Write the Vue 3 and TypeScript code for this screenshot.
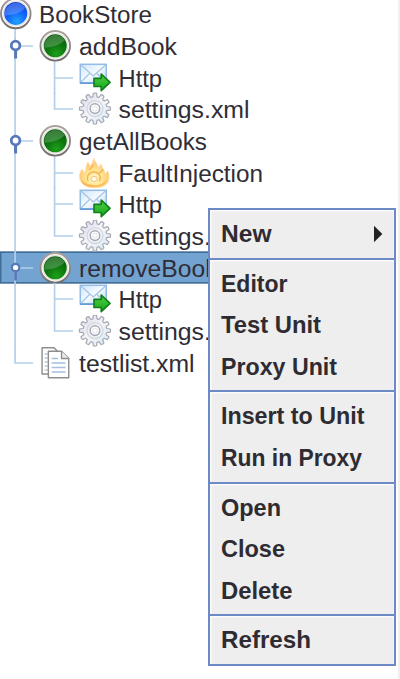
<script setup lang="ts">
type Icon = 'root' | 'unit' | 'mail' | 'gear' | 'fire' | 'docs'

interface TreeRow {
  label: string
  width: number
  depth: number
  icon: Icon
  last?: boolean
  selected?: boolean
  covered?: boolean
}

interface MenuItem {
  label: string
  width: number
  submenu?: boolean
}

const rows: TreeRow[] = [
  { label: 'BookStore', width: 113, depth: 0, icon: 'root' },
  { label: 'addBook', width: 98, depth: 1, icon: 'unit' },
  { label: 'Http', width: 43.5, depth: 2, icon: 'mail' },
  { label: 'settings.xml', width: 131, depth: 2, icon: 'gear', last: true },
  { label: 'getAllBooks', width: 128, depth: 1, icon: 'unit' },
  { label: 'FaultInjection', width: 144.5, depth: 2, icon: 'fire' },
  { label: 'Http', width: 43.5, depth: 2, icon: 'mail' },
  { label: 'settings.xml', width: 131, depth: 2, icon: 'gear', last: true, covered: true },
  { label: 'removeBook', width: 138.5, depth: 1, icon: 'unit', selected: true, covered: true },
  { label: 'Http', width: 43.5, depth: 2, icon: 'mail' },
  { label: 'settings.xml', width: 131, depth: 2, icon: 'gear', last: true, covered: true },
  { label: 'testlist.xml', width: 115.5, depth: 1, icon: 'docs', last: true },
]

const groups: MenuItem[][] = [
  [{ label: 'New', width: 50.5, submenu: true }],
  [
    { label: 'Editor', width: 66.5 },
    { label: 'Test Unit', width: 100 },
    { label: 'Proxy Unit', width: 116 },
  ],
  [
    { label: 'Insert to Unit', width: 143.5 },
    { label: 'Run in Proxy', width: 141 },
  ],
  [
    { label: 'Open', width: 60 },
    { label: 'Close', width: 64 },
    { label: 'Delete', width: 71.5 },
  ],
  [{ label: 'Refresh', width: 90 }],
]

const labelX = [39, 79, 118.5]

// Outline of a cog with twelve rounded teeth, centred on the origin.
const cog = Array.from({ length: 12 }, (_, i) => {
  const at = (r: number, offset: number) => {
    const a = ((i * 30 + offset) * Math.PI) / 180
    return `${(r * Math.sin(a)).toFixed(2)} ${(-r * Math.cos(a)).toFixed(2)}`
  }
  return `${i ? 'L' : 'M'}${at(12, -10)}L${at(15.3, -6)}Q${at(16, 0)} ${at(15.3, 6)}L${at(12, 10)}Q${at(11.4, 15)} ${at(12, 20)}`
}).join('') + 'Z'
</script>

<template>
  <main class="screen">
    <svg class="defs" width="0" height="0" aria-hidden="true">
      <defs>
        <linearGradient id="ring" x1="0" y1="0" x2="0" y2="1">
          <stop offset="0" stop-color="#aaa39d" />
          <stop offset="1" stop-color="#75706c" />
        </linearGradient>
        <radialGradient id="blue" cx=".55" cy=".85" r=".85">
          <stop offset="0" stop-color="#20a4ff" />
          <stop offset=".5" stop-color="#1266fa" />
          <stop offset="1" stop-color="#0d3fd8" />
        </radialGradient>
        <radialGradient id="green" cx=".55" cy=".85" r=".85">
          <stop offset="0" stop-color="#1fa01b" />
          <stop offset=".5" stop-color="#0c760d" />
          <stop offset="1" stop-color="#095a0d" />
        </radialGradient>
        <linearGradient id="paper" x1="0" y1="0" x2="1" y2="1">
          <stop offset="0" stop-color="#cfe6fb" />
          <stop offset=".5" stop-color="#f4faff" />
          <stop offset="1" stop-color="#b9d8f5" />
        </linearGradient>
        <linearGradient id="arrow" x1="0" y1="0" x2="0" y2="1">
          <stop offset="0" stop-color="#4fd345" />
          <stop offset="1" stop-color="#16a51a" />
        </linearGradient>
        <linearGradient id="steel" x1="0" y1="0" x2="1" y2="1">
          <stop offset="0" stop-color="#d9d4ea" />
          <stop offset=".5" stop-color="#f5f5f8" />
          <stop offset="1" stop-color="#cfe6f6" />
        </linearGradient>
        <radialGradient id="flame" cx=".5" cy=".68" r=".62">
          <stop offset="0" stop-color="#fff6cf" />
          <stop offset=".45" stop-color="#ffe590" />
          <stop offset=".8" stop-color="#ffc877" />
          <stop offset="1" stop-color="#ffe3b8" />
        </radialGradient>
      </defs>
    </svg>

    <div class="tree">
      <div v-for="(row, i) in rows" :key="i" class="row" :class="{ selected: row.selected, covered: row.covered }">
        <svg class="line" width="400" height="31.67" viewBox="0 0 400 31.67">
          <g class="branch">
            <path v-if="row.depth === 0" d="M15 15V32" />
            <template v-else>
              <path :d="row.icon === 'docs' ? 'M15 0V16H33' : 'M15 0V32'" />
              <path v-if="row.icon === 'unit'" d="M19 16H33M54.5 28V32" />
              <path v-if="row.depth === 2" :d="row.last ? 'M54.5 0V16H73' : 'M54.5 0V32M54.5 16H73'" />
            </template>
          </g>

          <g v-if="row.icon === 'unit'">
            <path class="stem" d="M15.5 20V28.5" />
            <circle class="knob" cx="15.5" cy="15.5" r="4.3" />
          </g>

          <g v-if="row.icon === 'root' || row.icon === 'unit'" :transform="row.icon === 'root' ? 'translate(15.7 15.5)' : 'translate(55.2 15.8)'">
            <circle r="14.8" fill="#fff" stroke="url(#ring)" stroke-width="1.9" />
            <circle r="12.4" fill="none" stroke="#e5e2df" stroke-width="1.2" />
            <circle r="11.5" :fill="row.icon === 'root' ? 'url(#blue)' : 'url(#green)'" />
            <path d="M-10.8 2A11 11 0 0 1 9.4-5.6Q4 1-10.8 2Z" fill="#fff" opacity=".2" />
          </g>

          <g v-if="row.icon === 'mail'">
            <rect x="80.2" y="2.3" width="26" height="18.5" fill="url(#paper)" stroke="#92bbe6" stroke-width="1.5" />
            <path d="M81 20L89.5 11.5M105.5 20L97 11.5M81 3L93.2 14L105.5 3" fill="none" stroke="#a4c3e2" stroke-width="1.2" />
            <path d="M80 21.2H106.5" stroke="#5d98d6" stroke-width="1.5" />
            <path d="M94 16.3H101.2V12L110 20.3L101.2 28.6V24.5H94Z" fill="url(#arrow)" stroke="#12801a" stroke-width="1.7" stroke-linejoin="round" />
          </g>

          <g v-if="row.icon === 'gear'" transform="translate(94.9 15.6)">
            <path :d="cog" fill="url(#steel)" stroke="#a5a8b1" stroke-width="1.2" />
            <circle r="8" fill="none" stroke="#d3d6dd" stroke-width="1.3" />
            <circle r="4.8" fill="#fff" stroke="#a7abb4" stroke-width="1.5" />
            <circle r="2.4" fill="none" stroke="#e0e2e8" />
          </g>

          <g v-if="row.icon === 'fire'">
            <path d="M83 27C78 23 79 16 82 12L84 16C87 13 85 8 88 5L90 9C93 7 92 3 94 1C95 5 98 7 98 11L101 7C102 12 105 13 105 17L108 14C110 21 109 26 104 29C98 32 88 31 83 27Z" fill="url(#flame)" stroke="#ffdca8" stroke-width=".8" />
            <path d="M81 22C82 30 90 31 95 30C102 30 106 27 107 22C105 26 101 28 96 28C90 28 84 27 81 22Z" fill="#fba93f" opacity=".7" />
            <path d="M88 24C86 18 90 15 94 15C99 15 102 20 99 24M89 13Q92 11 93 8M99 16Q102 15 103 12" fill="none" stroke="#f5b250" stroke-width="1.3" />
            <ellipse cx="94" cy="22" rx="3.2" ry="2.5" fill="#fffbea" stroke="#efc277" />
          </g>

          <g v-if="row.icon === 'docs'" stroke="#8d8d8d" stroke-width="1.4" stroke-linejoin="round">
            <path d="M42 .8H54L59 6V27H42Z" fill="#fff" />
            <path d="M44.5 7H50M44.5 11H50M44.5 15H50M44.5 19H50M44.5 23H50" stroke="#bccbdd" />
            <path d="M48.3 4.3H61.5L68.7 11.5V30.8H48.3Z" fill="#fff" />
            <path d="M61.5 4.3V11.5H68.7" fill="#eee" />
            <path d="M51.5 11.5H58M51.5 16H65.5M51.5 20.5H65.5M51.5 25H65.5" stroke="#a4c0df" />
          </g>

          <text class="label" :x="labelX[row.depth]" y="24.8" :textLength="row.width" lengthAdjust="spacingAndGlyphs">{{ row.label }}</text>
        </svg>
      </div>
    </div>

    <nav class="menu">
      <div v-for="(group, g) in groups" :key="g" class="group">
        <div v-for="item in group" :key="item.label" class="item">
          <svg class="line" width="150" height="41.5" viewBox="0 0 150 41.5">
            <text class="menu-label" x="0" y="29.3" :textLength="item.width" lengthAdjust="spacingAndGlyphs">{{ item.label }}</text>
          </svg>
          <svg v-if="item.submenu" class="caret" width="10" height="18" viewBox="0 0 10 18">
            <path d="M1 .8L9.3 9L1 17.2Z" fill="#222" />
          </svg>
        </div>
      </div>
    </nav>
  </main>
</template>

<style>
body {
  margin: 0;
  background: #fff;
}
</style>

<style scoped>
.screen {
  position: relative;
  box-sizing: border-box;
  width: 400px;
  height: 679px;
  overflow: hidden;
  border-right: 2px solid #f0f0f0;
  font-family: "Liberation Sans", Arial, sans-serif;
}

.defs {
  position: absolute;
}

.tree {
  margin-top: -1.6px;
}

.row {
  height: 31.67px;
}

.row.covered {
  width: 209px;
  overflow: hidden;
}

.row.selected {
  background: #73a3d1;
  box-shadow: 0 -0.7px 0 #426f99, 0 0.7px 0 #426f99, inset 1.5px 1px 0 #426f99, inset 0 -1px 0 #426f99;
}

.line {
  display: block;
  overflow: visible;
}

.branch {
  fill: none;
  stroke: #b5cfe9;
  stroke-width: 1.7;
}

.stem {
  stroke: #5778b9;
  stroke-width: 3;
}

.knob {
  fill: #fff;
  stroke: #5778b9;
  stroke-width: 2.8;
}

.selected .stem {
  stroke-width: 2.6;
}

.selected .knob {
  r: 3.7px;
  stroke-width: 2.2;
}

.label {
  fill: #302d36;
  font-size: 24px;
}

.menu {
  position: absolute;
  left: 208px;
  top: 208px;
  box-sizing: border-box;
  width: 188px;
  border: 2px solid #6b8ac6;
  background: #eee;
}

.group {
  padding: 3px 0 3.2px;
  box-shadow: inset 1.5px 1.5px 0 #fafafa, inset -1px 0 0 #f5f5f5;
}

.group + .group {
  border-top: 2px solid #6b8ac6;
}

.item {
  display: flex;
  align-items: center;
  justify-content: space-between;
  height: 41.5px;
  padding: 0 11px 0 10.8px;
}

.caret {
  display: block;
}

.menu-label {
  fill: #2e2c32;
  font-size: 24.5px;
  font-weight: bold;
}
</style>
